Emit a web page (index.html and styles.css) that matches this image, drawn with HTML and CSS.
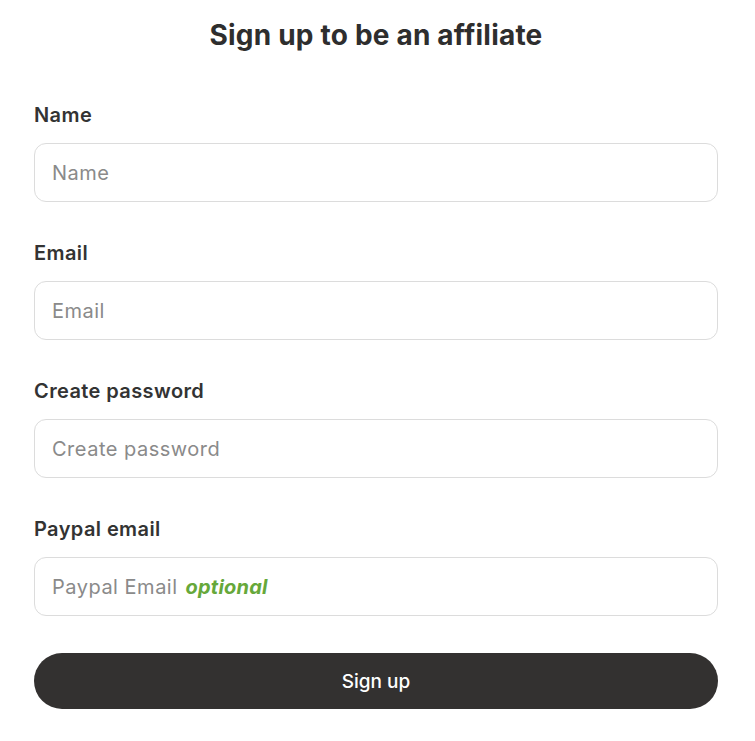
FILE: index.html
```html
<!DOCTYPE html>
<html lang="en">
<head>
<meta charset="utf-8">
<title>Sign up to be an affiliate</title>
<link rel="stylesheet" href="styles.css">
</head>
<body>
<main class="page">
  <h1 class="title">Sign up to be an affiliate</h1>
  <form class="form">
    <div class="field">
      <label class="label">Name</label>
      <div class="input"><span class="ph">Name</span></div>
    </div>
    <div class="field">
      <label class="label">Email</label>
      <div class="input"><span class="ph">Email</span></div>
    </div>
    <div class="field">
      <label class="label">Create password</label>
      <div class="input"><span class="ph">Create password</span></div>
    </div>
    <div class="field">
      <label class="label">Paypal email</label>
      <div class="input"><span class="ph">Paypal Email</span><span class="opt">optional</span></div>
    </div>
    <button type="button" class="btn">Sign up</button>
  </form>
</main>
</body>
</html>
```

FILE: styles.css
```css
* { box-sizing: border-box; }
html, body { margin: 0; padding: 0; background: #fff; }
body { font-family: Inter, "Noto Sans", sans-serif; color: #333; }
.page { width: 684px; margin-left: 34px; padding-top: 18px; }
.title {
  margin: 0;
  text-align: center;
  font-size: 28px;
  line-height: 34px;
  font-weight: 700;
  color: #2e2e2e;
  letter-spacing: 0.2px;
}
.form { display: flex; flex-direction: column; gap: 39px; margin-top: 51px; }
.field { display: flex; flex-direction: column; gap: 16px; }
.label { font-size: 20px; line-height: 24px; font-weight: 600; color: #333; letter-spacing: 0.4px; }
.input {
  height: 59px;
  border: 1px solid #dcdcdc;
  border-radius: 12px;
  padding: 0 17px;
  display: flex;
  align-items: center;
  gap: 8px;
  font-size: 20px;
  letter-spacing: 0.5px;
}
.ph { color: #8a8a8a; }
.opt { color: #66a83a; font-weight: 700; font-style: italic; letter-spacing: 0.2px; }
.btn {
  margin-top: -2px;
  height: 56px;
  border: 0;
  border-radius: 28px;
  background: #333130;
  color: #fff;
  font-family: Inter, sans-serif;
  font-size: 19px;
  font-weight: 500;
}
```
